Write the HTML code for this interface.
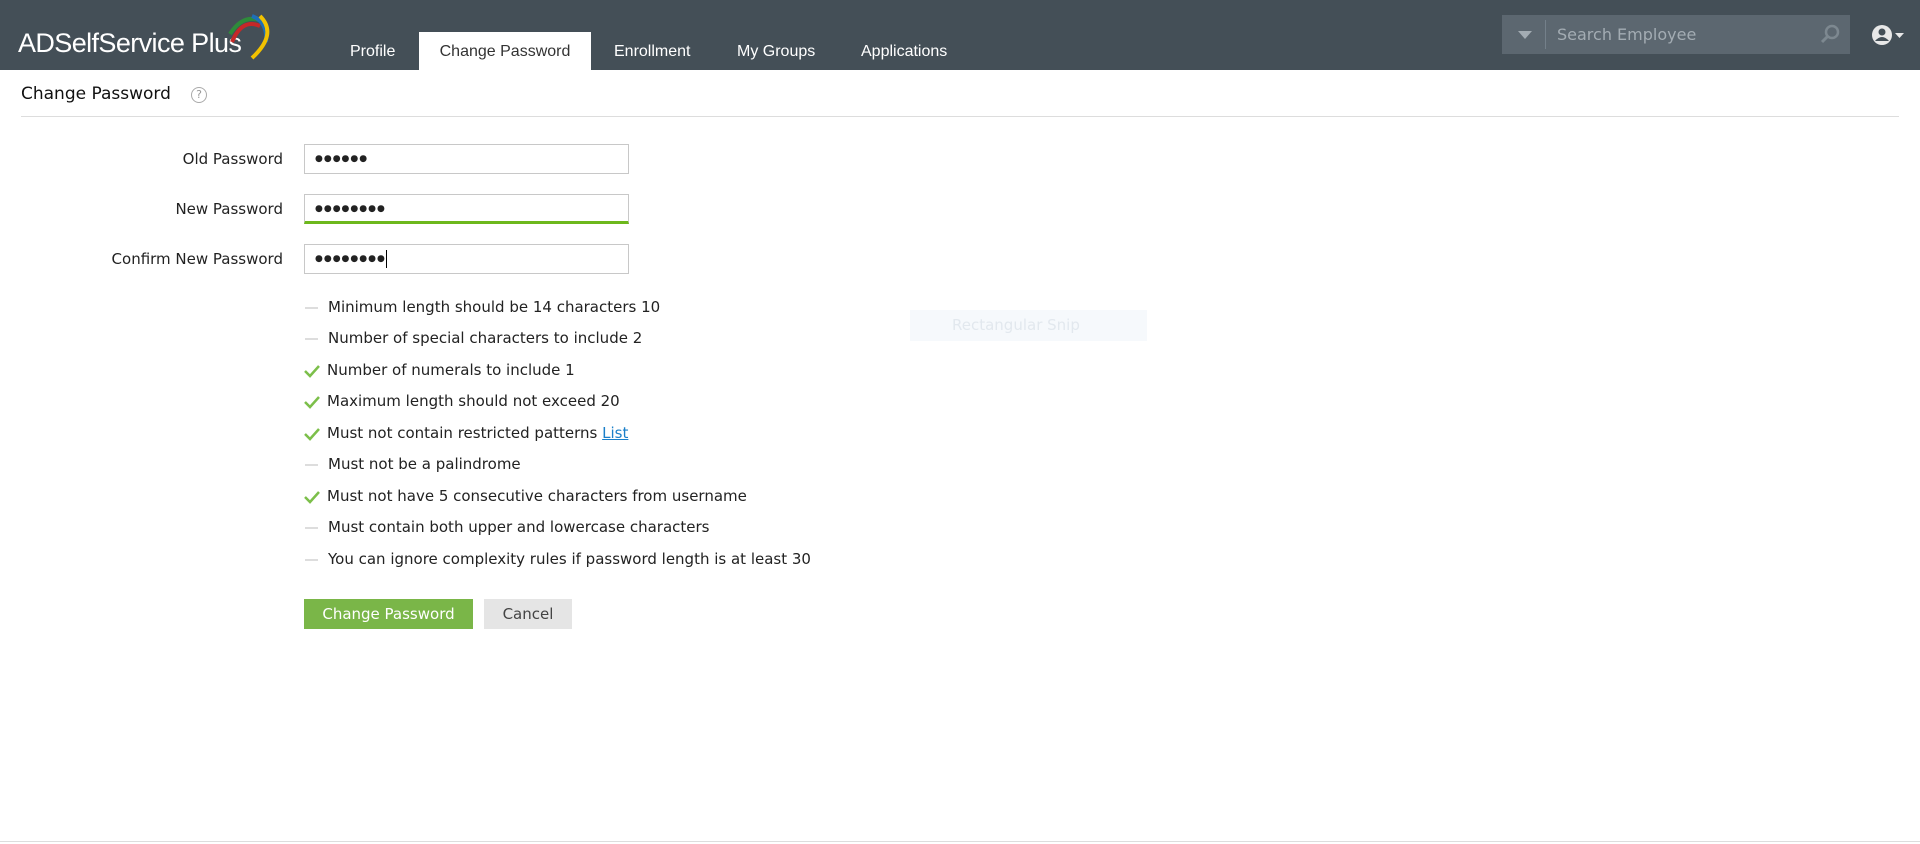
<!DOCTYPE html>
<html><head><meta charset="utf-8"><style>
*{box-sizing:border-box;margin:0;padding:0}
body{width:1920px;height:844px;overflow:hidden;background:#fff;font-family:"DejaVu Sans","Liberation Sans",sans-serif;color:#222;position:relative}
.hdr{position:absolute;left:0;top:0;width:1920px;height:70px;background:#444f57}
.logo{position:absolute;left:18px;top:28px;color:#fff;font-family:"Liberation Sans",sans-serif;font-size:27px;letter-spacing:-0.6px}
.tab{position:absolute;top:32px;height:38px;line-height:40px;color:#fff;font-size:16px;font-family:"Liberation Sans",sans-serif}
.tab.act{background:#fff;color:#333;left:419px;width:172px;text-align:center}
.search{position:absolute;left:1502px;top:15px;width:348px;height:39px;background:#5c6770}
.search .sep{position:absolute;left:43px;top:5px;width:1px;height:29px;background:#74808a}
.search .ph{position:absolute;left:55px;top:10px;color:#a3acb3;font-size:16px}
.title{position:absolute;left:21px;top:84px;font-size:17px;color:#111}
.help{position:absolute;left:191px;top:87px;width:16px;height:16px;border:1.5px solid #aaa;border-radius:50%;font-size:11px;color:#999;text-align:center;line-height:13px}
.hr{position:absolute;left:21px;top:116px;width:1878px;height:1px;background:#ddd}
.lbl{position:absolute;right:1637px;font-size:15px;color:#222;text-align:right;white-space:nowrap}
.inp{position:absolute;left:304px;width:325px;height:30px;border:1px solid #c8c8c8;font-size:9px;padding-left:10px;line-height:28px;letter-spacing:1px}
.rule{position:absolute;left:304px;font-size:15px;color:#222;white-space:nowrap}
.rule .d{display:inline-block;width:13px;height:2px;background:#ddd;vertical-align:middle;margin-right:10px;margin-left:1px}
.rule svg{vertical-align:middle;margin-right:7px}
.btn{position:absolute;top:599px;height:30px;line-height:30px;font-size:15px;text-align:center}
</style></head><body>
<div class="hdr">
<div class="logo">ADSelfService Plus</div>
<svg style="position:absolute;left:222px;top:12px" width="52" height="50" viewBox="0 0 52 50">
<path d="M10 30 Q20 6 38 14" stroke="#c62828" stroke-width="4" fill="none"/>
<path d="M8 22 Q22 0 42 10" stroke="#2e8b3a" stroke-width="4" fill="none"/>
<path d="M30 4 Q46 10 44 30" stroke="#1e6fb8" stroke-width="4" fill="none"/>
<path d="M38 4 Q56 22 30 46" stroke="#f2c200" stroke-width="4" fill="none"/>
</svg>
<div class="tab" style="left:350px">Profile</div>
<div class="tab act">Change Password</div>
<div class="tab" style="left:614px">Enrollment</div>
<div class="tab" style="left:737px">My Groups</div>
<div class="tab" style="left:861px">Applications</div>
<div class="search"><svg style="position:absolute;left:16px;top:16px" width="14" height="8"><path d="M0 0H14L7 8Z" fill="#a3acb3"/></svg><div class="sep"></div><div class="ph">Search Employee</div>
<svg style="position:absolute;left:318px;top:9px" width="20" height="20"><circle cx="12" cy="8" r="6" stroke="#7d8890" stroke-width="2.5" fill="none"/><path d="M8 12L2 18" stroke="#7d8890" stroke-width="3"/></svg></div>
<svg style="position:absolute;left:1871px;top:24px" width="40" height="24"><circle cx="11" cy="11" r="10" fill="#e8e8e8"/><circle cx="11" cy="8" r="3.5" fill="#444f57"/><path d="M4 17 Q11 9 18 17" fill="#444f57"/><path d="M24 9H33L28.5 14Z" fill="#e8e8e8"/></svg>
</div>
<div class="title">Change Password</div>
<div class="help">?</div>
<div class="hr"></div>
<div class="lbl" style="top:150px">Old Password</div>
<div class="lbl" style="top:200px">New Password</div>
<div class="lbl" style="top:250px">Confirm New Password</div>
<div class="inp" style="top:144px">●●●●●●</div>
<div class="inp" style="top:194px;border-bottom:3px solid #6db81c">●●●●●●●●</div>
<div class="inp" style="top:244px">●●●●●●●●<span style="display:inline-block;width:1px;height:18px;background:#000;vertical-align:middle;letter-spacing:0"></span></div>
<div class="rule" style="top:298px"><span class="d"></span>Minimum length should be 14 characters 10</div>
<div class="rule" style="top:329px"><span class="d"></span>Number of special characters to include 2</div>
<div class="rule" style="top:361px"><svg width="16" height="14"><path d="M1 7L6 12L15 2" stroke="#7cbf4a" stroke-width="2.5" fill="none"/></svg>Number of numerals to include 1</div>
<div class="rule" style="top:392px"><svg width="16" height="14"><path d="M1 7L6 12L15 2" stroke="#7cbf4a" stroke-width="2.5" fill="none"/></svg>Maximum length should not exceed 20</div>
<div class="rule" style="top:424px"><svg width="16" height="14"><path d="M1 7L6 12L15 2" stroke="#7cbf4a" stroke-width="2.5" fill="none"/></svg>Must not contain restricted patterns <span style="color:#1a7fc9;text-decoration:underline">List</span></div>
<div class="rule" style="top:455px"><span class="d"></span>Must not be a palindrome</div>
<div class="rule" style="top:487px"><svg width="16" height="14"><path d="M1 7L6 12L15 2" stroke="#7cbf4a" stroke-width="2.5" fill="none"/></svg>Must not have 5 consecutive characters from username</div>
<div class="rule" style="top:518px"><span class="d"></span>Must contain both upper and lowercase characters</div>
<div class="rule" style="top:550px"><span class="d"></span>You can ignore complexity rules if password length is at least 30</div>
<div style="position:absolute;left:910px;top:310px;width:237px;height:31px;background:#f6f9fc;color:#e2e8ee;font-size:15px;line-height:31px;padding-left:42px">Rectangular Snip</div>
<div class="btn" style="left:304px;width:169px;background:#7ab648;color:#fff">Change Password</div>
<div class="btn" style="left:484px;width:88px;background:#e5e5e5;color:#444">Cancel</div>
<div style="position:absolute;left:0;top:841px;width:1920px;height:1px;background:#ddd"></div>
</body></html>
